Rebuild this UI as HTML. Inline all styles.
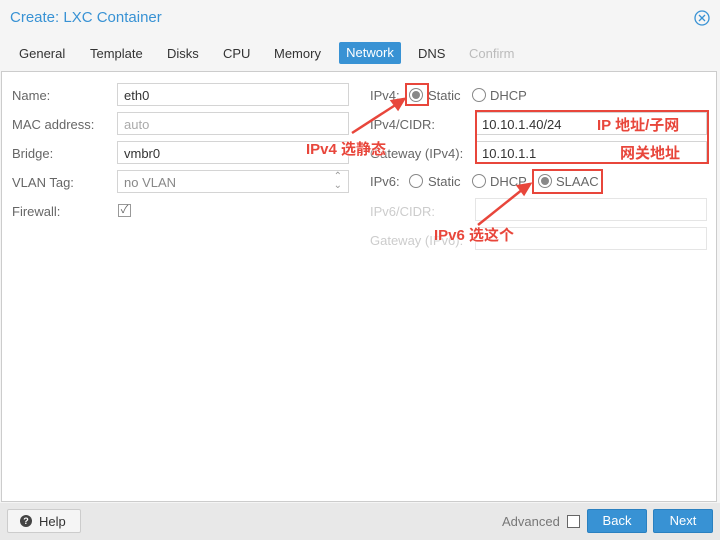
<!DOCTYPE html><html><head><style>
body{margin:0;width:720px;height:540px;position:relative;font-family:"Liberation Sans","Noto Sans CJK SC",sans-serif;font-size:13px;color:#333;background:#f5f5f5;overflow:hidden}
.a{position:absolute}
.inp{position:absolute;height:23px;border:1px solid #d4d4d4;background:#fff;box-sizing:border-box;padding:4px 6px;line-height:15px}
.lbl{position:absolute;color:#666}
.dis{color:#ccc}
.r{position:absolute;width:14px;height:14px;border:1px solid #888;border-radius:50%;box-sizing:border-box;background:#fff}
.r.on::after{content:"";position:absolute;left:2px;top:2px;width:8px;height:8px;border-radius:50%;background:#888}
.box{position:absolute;border:2px solid #e8463b;box-sizing:border-box}
.red{position:absolute;color:#e8463b;font-weight:bold;font-size:15px;text-shadow:0 0 2px #fff,0 0 2px #fff}
.btn{position:absolute;height:24px;background:#3892d4;color:#fff;border:1px solid #2a80c0;border-radius:2px;box-sizing:border-box;text-align:center;line-height:22px}
</style></head><body>
<div class="a" style="left:10px;top:9px;font-size:15px;color:#3892d4">Create: LXC Container</div>
<svg class="a" style="left:693px;top:9px" width="18" height="18"><circle cx="9" cy="9" r="7" fill="none" stroke="#3892d4" stroke-width="1.3"/><path d="M6 6L12 12M12 6L6 12" stroke="#3892d4" stroke-width="1.3"/></svg>
<div class="a" style="left:19px;top:46px">General</div>
<div class="a" style="left:90px;top:46px">Template</div>
<div class="a" style="left:167px;top:46px">Disks</div>
<div class="a" style="left:223px;top:46px">CPU</div>
<div class="a" style="left:274px;top:46px">Memory</div>
<div class="a" style="left:339px;top:42px;width:62px;height:22px;background:#3892d4;color:#fff;text-align:center;line-height:22px;border-radius:2px">Network</div>
<div class="a" style="left:418px;top:46px">DNS</div>
<div class="a" style="left:469px;top:46px;color:#bbb">Confirm</div>
<div class="a" style="left:1px;top:71px;width:716px;height:431px;background:#fff;border:1px solid #ccc;box-sizing:border-box"></div>
<div class="a" style="left:0;top:503px;width:720px;height:37px;background:#e8e8e8"></div>
<div class="lbl" style="left:12px;top:88px">Name:</div><div class="inp" style="left:117px;top:83px;width:232px">eth0</div>
<div class="lbl" style="left:12px;top:117px">MAC address:</div><div class="inp" style="left:117px;top:112px;width:232px;color:#aaa">auto</div>
<div class="lbl" style="left:12px;top:146px">Bridge:</div><div class="inp" style="left:117px;top:141px;width:232px">vmbr0</div>
<div class="lbl" style="left:12px;top:175px">VLAN Tag:</div><div class="inp" style="left:117px;top:170px;width:232px;color:#888">no VLAN<span style="position:absolute;right:6px;top:1px;color:#999;font-size:10px;line-height:9px">&#8963;<br>&#8964;</span></div>
<div class="lbl" style="left:12px;top:204px">Firewall:</div>
<div class="a" style="left:118px;top:204px;width:13px;height:13px;border:1px solid #999;box-sizing:border-box;font-size:11px;line-height:11px;text-align:center;color:#666">✓</div>
<div class="lbl" style="left:370px;top:88px">IPv4:</div>
<div class="r on" style="left:409px;top:88px"></div><div class="lbl" style="left:428px;top:88px">Static</div>
<div class="r" style="left:472px;top:88px"></div><div class="lbl" style="left:490px;top:88px">DHCP</div>
<div class="lbl" style="left:370px;top:117px">IPv4/CIDR:</div><div class="inp" style="left:475px;top:112px;width:232px">10.10.1.40/24</div>
<div class="lbl" style="left:370px;top:146px">Gateway (IPv4):</div><div class="inp" style="left:475px;top:141px;width:232px">10.10.1.1</div>
<div class="lbl" style="left:370px;top:174px">IPv6:</div>
<div class="r" style="left:409px;top:174px"></div><div class="lbl" style="left:428px;top:174px">Static</div>
<div class="r" style="left:472px;top:174px"></div><div class="lbl" style="left:490px;top:174px">DHCP</div>
<div class="r on" style="left:538px;top:174px"></div><div class="lbl" style="left:556px;top:174px">SLAAC</div>
<div class="lbl dis" style="left:370px;top:204px">IPv6/CIDR:</div><div class="inp" style="left:475px;top:198px;width:232px;border-color:#e5e5e5"></div>
<div class="lbl dis" style="left:370px;top:233px">Gateway (IPv6):</div><div class="inp" style="left:475px;top:227px;width:232px;border-color:#e5e5e5"></div>
<div class="box" style="left:405px;top:83px;width:24px;height:23px"></div>
<div class="box" style="left:475px;top:110px;width:234px;height:54px"></div>
<div class="box" style="left:532px;top:169px;width:71px;height:25px"></div>
<svg class="a" style="left:0;top:0" width="720" height="540"><g stroke="#e8463b" stroke-width="2.5" fill="#e8463b"><line x1="352" y1="133" x2="397" y2="104"/><path d="M404 99L392 101L398 109Z"/><line x1="478" y1="225" x2="523" y2="189"/><path d="M530 184L518 186L524 194Z"/></g></svg>
<div class="red" style="left:306px;top:138px">IPv4 选静态</div>
<div class="red" style="left:597px;top:114px">IP 地址/子网</div>
<div class="red" style="left:620px;top:142px">网关地址</div>
<div class="red" style="left:434px;top:224px">IPv6 选这个</div>
<div class="a" style="left:7px;top:509px;width:74px;height:24px;background:#f5f5f5;border:1px solid #ccc;border-radius:2px;box-sizing:border-box"></div>
<div class="a" style="left:20px;top:515px;width:12px;height:12px;border-radius:50%;background:#444;color:#fff;font-size:9px;line-height:12px;text-align:center;font-weight:bold">?</div>
<div class="a" style="left:39px;top:514px">Help</div>
<div class="a" style="left:502px;top:514px;color:#777">Advanced</div>
<div class="a" style="left:567px;top:515px;width:13px;height:13px;border:1px solid #666;background:#fff;box-sizing:border-box"></div>
<div class="btn" style="left:587px;top:509px;width:60px">Back</div>
<div class="btn" style="left:653px;top:509px;width:60px">Next</div>
</body></html>
